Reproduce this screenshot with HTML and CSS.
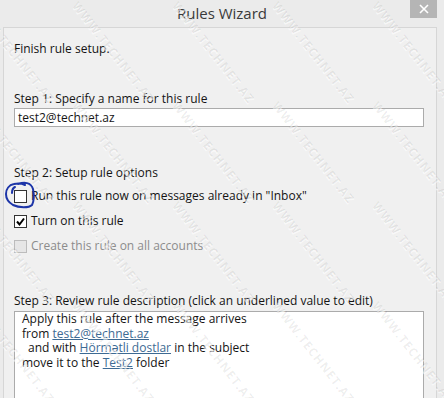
FILE: index.html
```html
<!DOCTYPE html>
<html lang="en">
<head>
    <meta charset="UTF-8">
    <meta name="viewport" content="width=device-width, initial-scale=1.0">
    <title>Rules Wizard</title>
    <link rel="stylesheet" href="styles.css">
</head>
<body>
    <div id="wizard">
        <div class="titlebar">
            <span></span>
            <span class="title">Rules Wizard</span>
            <span class="close-btn">
                <svg width="10" height="10" viewBox="0 0 10 10"><path d="M1 1 L9 9 M9 1 L1 9" stroke="#fff" stroke-width="1.6"/></svg>
            </span>
        </div>

        <div class="panel">
            <p class="intro">Finish rule setup.</p>

            <p class="step step-1">Step 1: Specify a name for this rule</p>
            <div class="name-box">test2@technet.az</div>

            <p class="step step-2">Step 2: Setup rule options</p>
            <div class="options">
                <div class="option">
                    <span class="box"></span>
                    <span>Run this rule now on messages already in "Inbox"</span>
                    <!-- hand drawn marker round the first box -->
                    <svg class="marker" width="34" height="30" viewBox="0 0 34 30">
                        <path d="M14 3 C20 1 27 1 29 8 C30 13 30 20 28 24 C25 27 15 27 9 24 C4 21 2 17 2 13 C2 8 5 4 10 3 C14 2 19 3 21 4 M8 12 C8 9 9 7 11 6" fill="none" stroke="#1d35a8" stroke-width="2" stroke-linecap="round"/>
                    </svg>
                </div>
                <div class="option">
                    <span class="box">
                        <svg width="11" height="11" viewBox="0 0 11 11"><path d="M2 5.5 L4.5 8.5 L9 2.5" fill="none" stroke="#000" stroke-width="2"/></svg>
                    </span>
                    <span>Turn on this rule</span>
                </div>
                <div class="option disabled">
                    <span class="box"></span>
                    <span>Create this rule on all accounts</span>
                </div>
            </div>

            <p class="step step-3">Step 3: Review rule description (click an underlined value to edit)</p>
            <div class="desc-box">
                <div>Apply this rule after the message arrives</div>
                <div>from <a href="#">test2@technet.az</a></div>
                <div class="indent">and with <a href="#">Hörmətli dostlar</a> in the subject</div>
                <div>move it to the <a href="#">Test2</a> folder</div>
            </div>
        </div>

        <div class="watermark">
            <span>WWW.TECHNET.AZ</span><span>WWW.TECHNET.AZ</span><span>WWW.TECHNET.AZ</span><span>WWW.TECHNET.AZ</span><span>WWW.TECHNET.AZ</span>
            <span>WWW.TECHNET.AZ</span><span>WWW.TECHNET.AZ</span><span>WWW.TECHNET.AZ</span><span>WWW.TECHNET.AZ</span><span>WWW.TECHNET.AZ</span>
            <span>WWW.TECHNET.AZ</span><span>WWW.TECHNET.AZ</span><span>WWW.TECHNET.AZ</span><span>WWW.TECHNET.AZ</span><span>WWW.TECHNET.AZ</span>
            <span>WWW.TECHNET.AZ</span><span>WWW.TECHNET.AZ</span><span>WWW.TECHNET.AZ</span><span>WWW.TECHNET.AZ</span><span>WWW.TECHNET.AZ</span>
        </div>
    </div>
</body>
</html>
```

FILE: styles.css
```css
body {
    margin: 0;
    font-family: "Open Sans", "Noto Sans", sans-serif;
    font-size: 12px;
    color: #141414;
    background-color: #ebebeb;
}

#wizard {
    position: relative;
    width: 444px;
    height: 398px;
    overflow: hidden;
}

.titlebar {
    height: 27px;
    display: grid;
    grid-template-columns: 1fr auto 1fr;
    align-items: start;
}

.title {
    font-size: 15px;
    line-height: 27px;
    color: #3a3a3a;
}

.close-btn {
    justify-self: end;
    margin-right: 7px;
    width: 27px;
    height: 18px;
    background-color: #b5b5b5;
    display: flex;
    justify-content: center;
    align-items: center;
}

.panel {
    margin: 0 7px 0 3px;
    height: 400px;
    padding: 13px 12px 0 10px;
    background-color: #f0f0f0;
    border: 1px solid #d6d6d6;
    border-bottom: none;
}

p {
    margin: 0;
    line-height: 16px;
}

.step-1 {
    margin-top: 34px;
}

.step-2 {
    margin-top: 38px;
}

.step-3 {
    margin-top: 39px;
}

.name-box {
    margin-top: 1px;
    height: 19px;
    box-sizing: border-box;
    padding: 0 3px;
    line-height: 17px;
    background-color: #fff;
    border: 1px solid #ababab;
}

.options {
    margin-top: 7px;
    display: flex;
    flex-direction: column;
    gap: 9px;
}

.option {
    position: relative;
    display: flex;
    align-items: center;
    gap: 4px;
    line-height: 16px;
}

.box {
    width: 13px;
    height: 13px;
    box-sizing: border-box;
    border: 1px solid #333;
    background-color: #fff;
    display: flex;
    justify-content: center;
    align-items: center;
}

.disabled {
    color: #8c8c8c;
}

.disabled .box {
    border-color: #bcbcbc;
    background-color: #e6e6e6;
}

.marker {
    position: absolute;
    left: -10px;
    top: -7px;
}

.desc-box {
    margin-top: 2px;
    height: 100px;
    padding: 0 7px;
    line-height: 14.5px;
    background-color: #fff;
    border: 1px solid #ababab;
}

.indent {
    padding-left: 6px;
}

a {
    color: #3d6a93;
    text-decoration: underline;
}

.watermark {
    position: absolute;
    left: -36px;
    top: 2px;
    display: grid;
    grid-template-columns: repeat(5, 100px);
    grid-auto-rows: 100px;
    pointer-events: none;
}

.watermark span {
    display: flex;
    justify-content: center;
    align-items: center;
    font-weight: bold;
    font-size: 12px;
    letter-spacing: 1px;
    white-space: nowrap;
    color: rgba(0, 0, 0, 0.07);
    text-shadow: 1px 1px 0 rgba(255, 255, 255, 0.6);
    transform: rotate(52deg);
}
```
